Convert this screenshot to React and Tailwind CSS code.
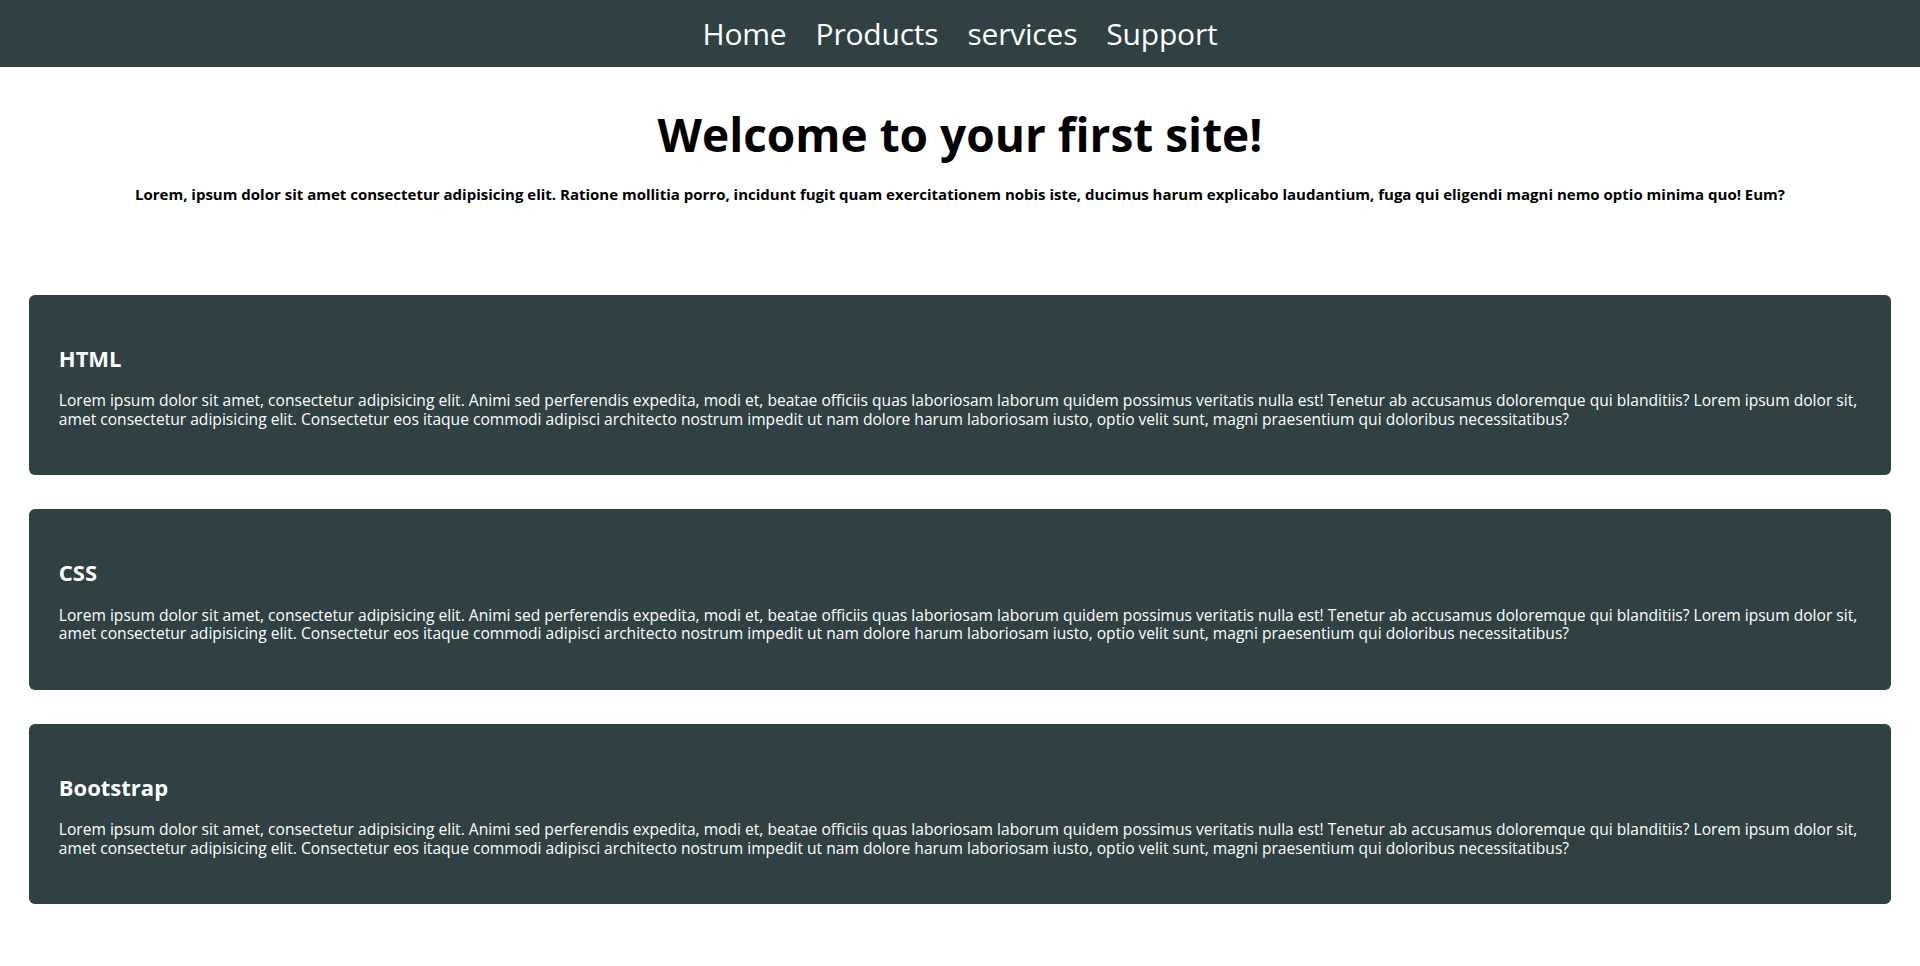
import React from "react";

const lorem =
  "Lorem ipsum dolor sit amet, consectetur adipisicing elit. Animi sed perferendis expedita, modi et, beatae officiis quas laboriosam laborum quidem possimus veritatis nulla est! Tenetur ab accusamus doloremque qui blanditiis? Lorem ipsum dolor sit, amet consectetur adipisicing elit. Consectetur eos itaque commodi adipisci architecto nostrum impedit ut nam dolore harum laboriosam iusto, optio velit sunt, magni praesentium qui doloribus necessitatibus?";

function Card({ title }) {
  return (
    <section className="w-[97%] mx-auto bg-[#2f4142] rounded-[6px] text-white px-[30px] pt-[49px] pb-[47px]">
      <h2 className="text-[22px] font-bold leading-[28px] mb-[19.5px]">{title}</h2>
      <p className="text-[15.6px] leading-[18.5px]">{lorem}</p>
    </section>
  );
}

export default function App() {
  return (
    <div className="min-h-[966px] bg-white" style={{ fontFamily: "'Open Sans', sans-serif" }}>
      <nav className="bg-[#2f4142] h-[67px] flex items-center justify-center gap-[29px]">
        {["Home", "Products", "services", "Support"].map((n) => (
          <a
            key={n}
            href="#"
            className="text-white text-[30px] leading-none tracking-[-0.2px]"
          >
            {n}
          </a>
        ))}
      </nav>
      <header className="text-center pt-[39px]">
        <h1 className="text-[46px] font-bold leading-[56px] text-black">Welcome to your first site!</h1>
        <p className="mt-[23px] text-[15px] font-bold leading-[18px] text-black">
          Lorem, ipsum dolor sit amet consectetur adipisicing elit. Ratione mollitia porro, incidunt fugit quam exercitationem nobis iste, ducimus harum explicabo laudantium, fuga qui eligendi magni nemo optio minima quo! Eum?
        </p>
      </header>
      <main className="mt-[91.5px] flex flex-col gap-[34px] pb-[60px]">
        <Card title="HTML" />
        <Card title="CSS" />
        <Card title="Bootstrap" />
      </main>
    </div>
  );
}
